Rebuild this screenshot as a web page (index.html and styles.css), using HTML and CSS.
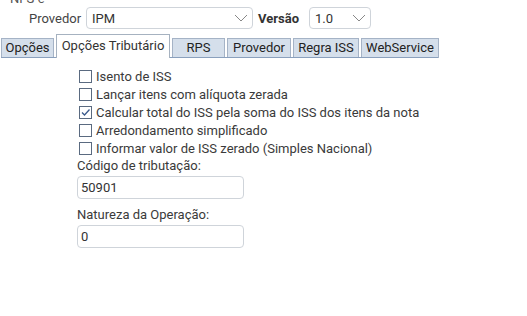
FILE: index.html
```html
<!DOCTYPE html>
<html>
<head>
<meta charset="utf-8">
<link rel="stylesheet" href="styles.css">
</head>
<body>
<div class="title"><span>NFS-e</span></div>
<div class="toprow">
  <span class="lbl">Provedor</span>
  <div class="select sel-prov"><span>IPM</span><svg class="chev" width="14" height="8" viewBox="0 0 14 8"><path d="M1 1 L7 7 L13 1" fill="none" stroke="#888" stroke-width="1"/></svg></div>
  <span class="lbl bold">Versão</span>
  <div class="select sel-ver"><span>1.0</span><svg class="chev" width="14" height="8" viewBox="0 0 14 8"><path d="M1 1 L7 7 L13 1" fill="none" stroke="#888" stroke-width="1"/></svg></div>
</div>
<div class="tabs">
  <div class="tab w1">Opções</div>
  <div class="tab active">Opções Tributário</div>
  <div class="tab w3">RPS</div>
  <div class="tab w4">Provedor</div>
  <div class="tab w5">Regra ISS</div>
  <div class="tab w6">WebService</div>
</div>
<div class="panel">
  <div class="chk"><span class="box"></span>Isento de ISS</div>
  <div class="chk"><span class="box"></span>Lançar itens com alíquota zerada</div>
  <div class="chk"><span class="box checked"><svg width="11" height="11" viewBox="0 0 11 11"><path d="M2 5.5 L4.5 8 L9.5 2.5" fill="none" stroke="#3a5a8c" stroke-width="1.3"/></svg></span>Calcular total do ISS pela soma do ISS dos itens da nota</div>
  <div class="chk"><span class="box"></span>Arredondamento simplificado</div>
  <div class="chk"><span class="box"></span>Informar valor de ISS zerado (Simples Nacional)</div>
  <div class="field">
    <div class="flabel">Código de tributação:</div>
    <div class="input">50901</div>
  </div>
  <div class="field">
    <div class="flabel">Natureza da Operação:</div>
    <div class="input">0</div>
  </div>
</div>
</body>
</html>
```
FILE: styles.css
```css
html, body {
  margin: 0;
  padding: 0;
  background: #ffffff;
}
body {
  font-family: Roboto, "Noto Sans", sans-serif;
  font-size: 13px;
  color: #333;
  width: 527px;
  height: 316px;
  overflow: hidden;
}
.title {
  height: 7px;
  line-height: 0;
  padding-left: 10px;
  overflow: hidden;
  color: #555;
}
.title span {
  display: block;
  margin-top: -1px;
}
.toprow {
  display: flex;
  align-items: center;
  padding-left: 29px;
  height: 22px;
}
.lbl {
  color: #444;
  margin-right: 5px;
}
.lbl.bold {
  font-weight: bold;
  color: #333;
  margin-left: 5px;
  margin-right: 10px;
}
.select {
  box-sizing: border-box;
  height: 22px;
  border: 1px solid #cfd4da;
  border-radius: 4px;
  display: flex;
  align-items: center;
  justify-content: space-between;
  padding: 0 4px 0 5px;
  background: #fff;
  color: #333;
}
.sel-prov { width: 167px; }
.sel-ver { width: 62px; }
.chev { flex: none; }
.tabs {
  margin-top: 5px;
  display: flex;
  align-items: flex-end;
  padding-left: 1px;
  height: 24px;
  position: relative;
}
.tabs::after {
  content: "";
  position: absolute;
  left: 1px;
  width: 437px;
  bottom: 0;
  height: 1px;
  background: #8aa0bd;
}
.tab {
  box-sizing: border-box;
  height: 20px;
  line-height: 18px;
  border: 1px solid #a5b3c6;
  background: #d5dfeb;
  text-align: center;
  margin-right: 2px;
  color: #222;
}
.tab.active {
  height: 24px;
  line-height: 22px;
  background: #fff;
  border-color: #a6b2c0;
  border-bottom: none;
  position: relative;
  z-index: 1;
  width: 114px;
  color: #333;
}
.w1 { width: 53px; }
.w3 { width: 53px; }
.w4 { width: 64px; }
.w5 { width: 66px; }
.w6 { width: 78px; }
.panel {
  padding-left: 79px;
  padding-top: 9px;
}
.chk {
  display: flex;
  align-items: center;
  height: 18px;
  color: #3a3a3a;
}
.box {
  box-sizing: border-box;
  width: 13px;
  height: 13px;
  border: 1px solid #5a6a80;
  background: #fff;
  margin-right: 4px;
  display: flex;
  align-items: center;
  justify-content: center;
}
.field {
  margin-left: -2px;
  margin-top: 1px;
}
.field + .field {
  margin-top: 8px;
}
.flabel {
  height: 16px;
  line-height: 16px;
  color: #3a3a3a;
}
.input {
  box-sizing: border-box;
  width: 167px;
  height: 23px;
  margin-top: 2px;
  border: 1px solid #cfd4da;
  border-radius: 4px;
  padding-left: 3px;
  line-height: 21px;
  color: #333;
}
```
